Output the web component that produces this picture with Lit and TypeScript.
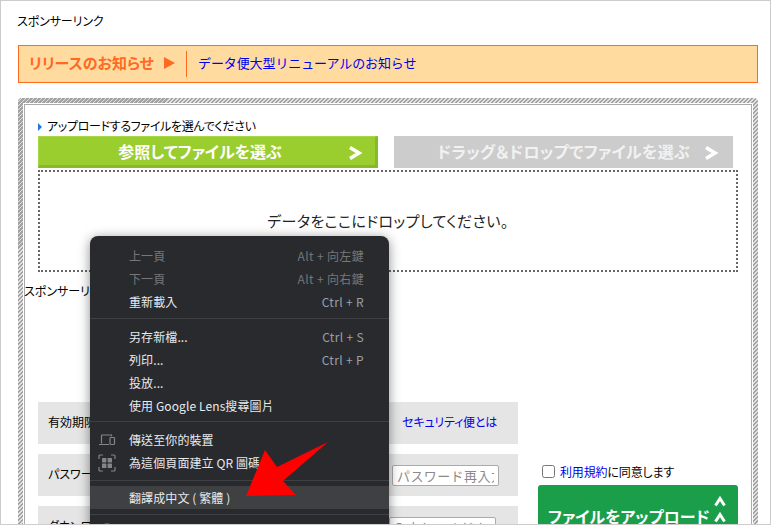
import { LitElement, html, css, svg } from "lit";
import { customElement } from "lit/decorators.js";

type MenuItem = { label: string; key?: string; off?: boolean; icon?: string; hover?: boolean };

const groups: MenuItem[][] = [
  [
    { label: "上一頁", key: "Alt + 向左鍵", off: true },
    { label: "下一頁", key: "Alt + 向右鍵", off: true },
    { label: "重新載入", key: "Ctrl + R" },
  ],
  [
    { label: "另存新檔...", key: "Ctrl + S" },
    { label: "列印...", key: "Ctrl + P" },
    { label: "投放..." },
    { label: "使用 Google Lens搜尋圖片" },
  ],
  [
    { label: "傳送至你的裝置", icon: "device" },
    { label: "為這個頁面建立 QR 圖碼", icon: "qr" },
  ],
  [{ label: "翻譯成中文 ( 繁體 )", hover: true }],
];

const deviceIcon = svg`<svg class="ic" viewBox="0 0 18 18" width="18" height="18"><path d="M3.5 4h10v1.2M3.5 4v8.5M1 13.5h10" fill="none" stroke="#80868b" stroke-width="1.2"/><rect x="12" y="6.5" width="4.5" height="7" rx=".8" fill="none" stroke="#80868b" stroke-width="1.2"/></svg>`;
const qrIcon = svg`<svg class="ic" viewBox="0 0 18 18" width="18" height="18"><path d="M1 5V2a1 1 0 0 1 1-1h3M13 1h3a1 1 0 0 1 1 1v3M17 13v3a1 1 0 0 1-1 1h-3M5 17H2a1 1 0 0 1-1-1v-3" fill="none" stroke="#80868b" stroke-width="1.2"/><rect x="4" y="4" width="4.4" height="4.4" rx=".6" fill="#80868b"/><rect x="9.6" y="4" width="4.4" height="4.4" rx=".6" fill="#80868b"/><rect x="4" y="9.6" width="4.4" height="4.4" rx=".6" fill="#80868b"/><rect x="9.6" y="9.6" width="4.4" height="4.4" rx=".6" fill="#80868b"/></svg>`;
const chevron = svg`<svg viewBox="0 0 14 12" width="14" height="12"><path d="M2.5 10.5 7 3.5l4.5 7" fill="none" stroke="#fff" stroke-width="3"/></svg>`;
const arrow = svg`<svg viewBox="0 0 16 16" width="16" height="16"><path d="M3 2.5 12 8l-9 5.5" fill="none" stroke="#fff" stroke-width="3.6"/></svg>`;

@customElement("app-root")
export class AppRoot extends LitElement {
  static styles = css`
    :host {
      display: block;
      width: 771px;
      height: 525px;
      box-sizing: border-box;
      position: relative;
      overflow: hidden;
      background: #fff;
      border: 1px solid #ccc;
      font-family: "Noto Sans CJK JP", "Noto Sans", sans-serif;
      font-size: 12px;
      font-feature-settings: "palt";
      color: #000;
    }
    a { color: #0000ee; text-decoration: none; }
    .page { padding: 11px 12px 0 17px; display: flex; flex-direction: column; }
    .sponsor { line-height: 18px; height: 33px; margin-left: -1px; letter-spacing: -0.1px; }
    .release {
      height: 38px;
      box-sizing: border-box;
      border: 1px solid #ff6a1f;
      background: #ffdba0;
      display: flex;
      align-items: center;
      padding: 0 0 3px 10px;
    }
    .release b { color: #ff6a22; font-size: 15px; font-weight: 700; width: 126px; white-space: nowrap; }
    .tri { width: 0; height: 0; border-left: 11px solid #ff6a22; border-top: 6px solid transparent; border-bottom: 6px solid transparent; margin-left: 9px; }
    .sep { width: 1px; height: 26px; background: #ff6a1f; margin: 3px 11px 0; }
    .release a { font-size: 13px; font-feature-settings: normal; letter-spacing: -0.1px; }
    .panel {
      margin-top: 15px;
      padding: 6px;
      border-radius: 4px;
      height: 500px;
      box-sizing: border-box;
      background: repeating-linear-gradient(-45deg, #a2a2a2 0 1.7px, #e2e2e2 1.7px 2.83px);
    }
    .inner {
      background: #fff;
      border: 1px solid #aaa;
      box-shadow: 0 0 0 1px #fff;
      height: 100%;
      box-sizing: border-box;
      padding: 12px 0 0 13px;
    }
    .lead { display: flex; align-items: center; height: 19px; gap: 5px; letter-spacing: -0.32px; padding-bottom: 2px; box-sizing: border-box; }
    .lead i { width: 0; height: 0; border-left: 4px solid #1e78e0; border-top: 4px solid transparent; border-bottom: 4px solid transparent; margin-top: 2px; }
    .pick { display: flex; gap: 16px; }
    .btn {
      height: 32px;
      box-sizing: border-box;
      display: flex;
      align-items: center;
      justify-content: center;
      color: #fff;
      font-size: 16px;
      font-weight: 700;
      position: relative;
      padding-bottom: 3px;
    }
    .btn.go { width: 340px; background: #9acd2e; border-right: 3px solid #8ab82a; border-bottom: 3px solid #8ab82a; border-left: 1px solid #a6d548; border-top: 1px solid #a6d548; padding-bottom: 0; }
    .btn.go span { margin: 0 14px 0 0; }
    .btn.drag { width: 339px; background: #ccc; color: #f2f2f2; letter-spacing: 0.3px; }
    .arr { position: absolute; display: flex; }
    .go .arr { right: 12px; top: 8px; }
    .drag .arr { right: 14px; top: 9px; }
    .drop {
      margin-top: 2px;
      width: 700px;
      height: 102px;
      box-sizing: border-box;
      border: 2px dotted #666;
      display: flex;
      align-items: center;
      justify-content: center;
      font-size: 15px;
      letter-spacing: 0.4px;
      color: #222;
      padding-bottom: 2px;
    }
    .sponsor2 { margin: 10px 0 0 -14px; line-height: 18px; height: 120px; }
    .lower { display: flex; align-items: flex-start; gap: 20px; }
    .rows { width: 480px; display: flex; flex-direction: column; gap: 10px; }
    .row {
      height: 42px;
      background: #e5e5e5;
      display: flex;
      align-items: center;
      padding-left: 10px;
    }
    .label { margin-bottom: 3px; }
    .row a { margin: 0 21px 3px auto; letter-spacing: -0.2px; }
    .row input {
      margin-left: auto;
      width: 107px;
      height: 21px;
      box-sizing: border-box;
      margin-right: 19px;
      border: 1px solid #aaa;
      border-radius: 2px;
      font: inherit;
      font-size: 13px;
      font-feature-settings: normal;
      letter-spacing: 0.4px;
      padding: 0 4px;
      background: #fff;
    }
    .row input::placeholder { color: #8a8a8a; }
    .row input.last { margin-right: 22px; }
    .aside { padding-top: 60px; width: 200px; }
    .agree { display: flex; align-items: center; height: 18px; padding-left: 4px; margin-bottom: 5px; letter-spacing: -0.15px; }
    .agree input { margin: 0 5px 0 0; width: 13px; height: 13px; }
    .upload {
      height: 60px;
      background: #1a9e4a;
      border-radius: 3px;
      color: #fff;
      font-weight: 700;
      font-size: 16px;
      position: relative;
      padding: 19px 0 0 10px;
      box-sizing: border-box;
    }
    .chevs { position: absolute; left: 175px; top: 10px; display: flex; flex-direction: column; gap: 4px; }
    .menu {
      position: absolute;
      left: 89px;
      top: 235px;
      width: 299px;
      height: 320px;
      box-sizing: border-box;
      background: #292a2d;
      border-radius: 8px;
      box-shadow: 0 2px 12px rgba(0, 0, 0, 0.45);
      padding-top: 8px;
      font-family: "Noto Sans CJK TC", "Noto Sans", sans-serif;
      font-feature-settings: normal;
      font-size: 12px;
      color: #e8eaed;
    }
    .group { padding-bottom: 5px; border-bottom: 1px solid #3f4043; margin-bottom: 6px; }
    .group:nth-child(2) { padding-bottom: 4px; }
    .group:nth-child(3) { padding-bottom: 6px; margin-bottom: 5px; }
    .item {
      height: 23px;
      display: flex;
      align-items: center;
      justify-content: space-between;
      padding: 0 25px 0 39px;
      position: relative;
      letter-spacing: 0.1px;
    }
    .item.off { color: #75777a; }
    .item.hover { background: #3f4042; }
    .item em { font-style: normal; color: #9aa0a6; letter-spacing: 0.35px; }
    .item.off em { color: #75777a; }
    .ic { position: absolute; left: 8px; top: 3px; }
    .redbit { position: absolute; left: 13px; top: 287px; width: 8px; height: 8px; border-radius: 50%; background: #d93025; }
    .pointer { position: absolute; left: 243px; top: 439px; }
  `;

  render() {
    return html`
      <div class="page">
        <div class="sponsor">スポンサーリンク</div>
        <div class="release">
          <b>リリースのお知らせ</b><span class="tri"></span><span class="sep"></span>
          <a href="#">データ便大型リニューアルのお知らせ</a>
        </div>
        <div class="panel">
          <div class="inner">
            <div class="lead"><i></i>アップロードするファイルを選んでください</div>
            <div class="pick">
              <div class="btn go"><span>参照してファイルを選ぶ</span><div class="arr">${arrow}</div></div>
              <div class="btn drag"><span>ドラッグ＆ドロップでファイルを選ぶ</span><div class="arr">${arrow}</div></div>
            </div>
            <div class="drop">データをここにドロップしてください。</div>
            <div class="sponsor2">スポンサーリンク</div>
            <div class="lower">
              <div class="rows">
                <div class="row"><span class="label">有効期限</span><a href="#">セキュリティ便とは</a></div>
                <div class="row"><span class="label">パスワード</span><input placeholder="パスワード再入力" /></div>
                <div class="row"><span class="label">ダウンロード</span><input class="last" placeholder="入力してください" /></div>
              </div>
              <div class="aside">
                <label class="agree"><input type="checkbox" /><a href="#">利用規約</a>に同意します</label>
                <div class="upload">ファイルをアップロード<div class="chevs">${chevron}${chevron}</div></div>
              </div>
            </div>
          </div>
        </div>
      </div>
      <div class="menu">
        ${groups.map(
          (g) => html`<div class="group">
            ${g.map(
              (m) => html`<div class="item ${m.off ? "off" : ""} ${m.hover ? "hover" : ""}">
                ${m.icon === "device" ? deviceIcon : m.icon === "qr" ? qrIcon : ""}
                <span>${m.label}</span>${m.key ? html`<em>${m.key}</em>` : ""}
              </div>`
            )}
          </div>`
        )}
        <span class="redbit"></span>
      </div>
      <svg class="pointer" width="90" height="62" viewBox="0 0 90 62">
        <path d="M84 2 33 27 21 10 2 56 52 55 39 41Z" fill="#f00" />
      </svg>
    `;
  }
}
